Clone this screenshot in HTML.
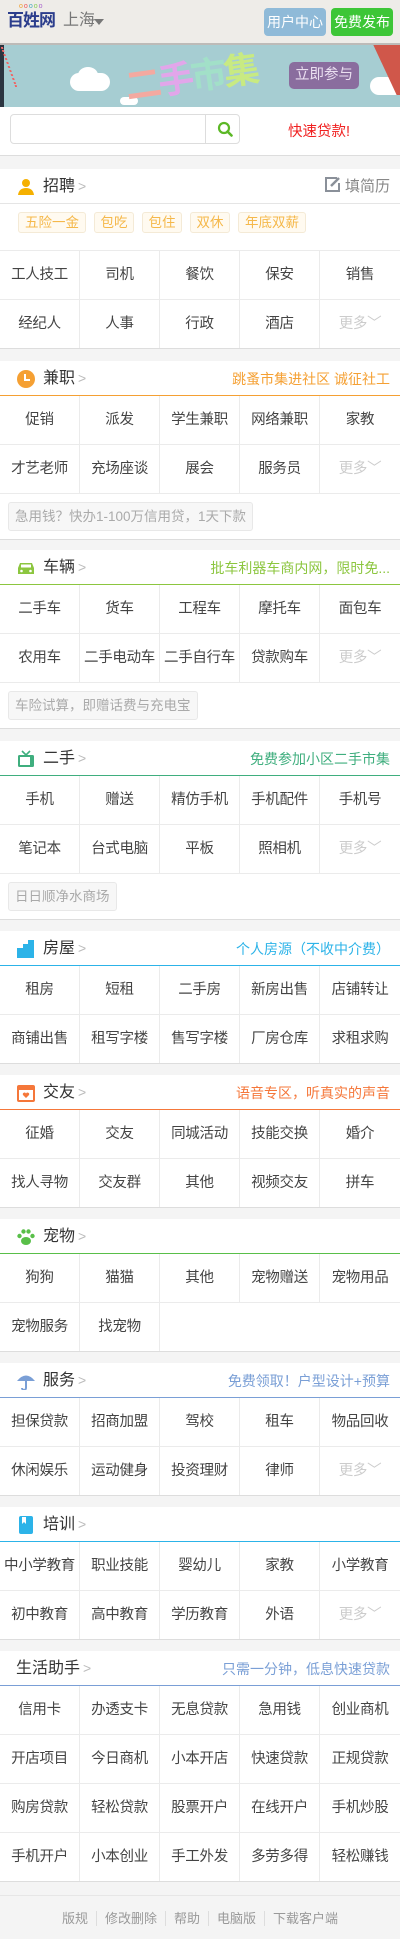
<!DOCTYPE html>
<html><head><meta charset="utf-8">
<style>
*{margin:0;padding:0;box-sizing:border-box}
body{width:400px;height:1939px;background:#f4f4f4;font-family:"Liberation Sans","Noto Sans CJK SC",sans-serif;color:#444;overflow:hidden;position:relative}
.hd{position:absolute;top:0;left:0;width:400px;height:45px;background:#eeece8;border-bottom:2px solid #bdbbb8}
.logo{position:absolute;left:7px;top:11px;font-size:17px;font-weight:bold;color:#2b3d8c;letter-spacing:-1px;line-height:20px}
.dots{position:absolute;left:19px;top:3px;font-size:7px;letter-spacing:1px;line-height:8px}
.city{position:absolute;left:63px;top:11px;font-size:16px;color:#777;line-height:20px}
.tri{position:absolute;left:94px;top:19px;width:0;height:0;border-left:5px solid transparent;border-right:5px solid transparent;border-top:6px solid #777}
.btn{position:absolute;top:8px;height:28px;width:62px;border-radius:4px;color:#fff;font-size:14px;text-align:center;line-height:28px}
.banner{position:absolute;top:45px;left:0;width:400px;height:62px;background:#a6cdd2;overflow:hidden}
.search{position:absolute;top:107px;left:0;width:400px;height:49px;background:#fff;border-bottom:1px solid #ddd}
.inp{position:absolute;left:10px;top:7px;width:230px;height:30px;border:1px solid #ddd;border-radius:4px}
.inp i{position:absolute;left:194px;top:0;width:1px;height:28px;background:#ddd}
.sec{position:absolute;left:0;width:400px;background:#fff;border-bottom:1px solid #ddd;overflow:hidden}
.sh{height:35px;border-bottom:1px solid #e5e5e5;position:relative}
.sh .ic{position:absolute;left:17px;top:9px;width:18px;height:18px}
.sh .t{position:absolute;left:43px;top:6px;font-size:16px;color:#333;line-height:22px}
.sh .t b{font-weight:normal;color:#bbb;font-size:14px;margin-left:3px}
.sh .r{position:absolute;right:10px;top:8px;font-size:14px;white-space:nowrap;line-height:20px}
.row{display:flex;height:49px;border-bottom:1px solid #ebebeb;overflow:hidden}
.row.l{border-bottom:none;height:48px}
.row span{width:80px;height:48px;border-right:1px solid #ebebeb;text-align:center;line-height:48px;font-size:14.5px;color:#444;white-space:nowrap;overflow:hidden;letter-spacing:-0.3px}
.row span:last-child{border-right:none}
.row span.m{color:#ccc}
.tags{height:47px;border-bottom:1px solid #ebebeb;position:relative}
.tag{position:absolute;top:8px;height:21px;border:1px solid #f4ead6;background:#fffaf0;color:#f5b84a;font-size:13.5px;line-height:19px;text-align:center;border-radius:3px}
.ad{height:45px;position:relative}
.ad div{position:absolute;left:8px;top:8px;height:29px;border:1px solid #e8e8e8;background:#f7f7f7;border-radius:3px;color:#aaa;font-size:13.5px;line-height:27px;padding:0 6px;white-space:nowrap}
.ft{position:absolute;top:1895px;left:0;width:400px;height:44px;border-top:1px solid #e6e6e6;background:#f4f4f4;text-align:center;font-size:13px;color:#999;padding-top:12px}
.ft span{padding:0 8px;border-left:1px solid #ddd}
.ft span:first-child{border-left:none}
</style></head><body>
<div class="hd">
  <div class="dots"><span style="color:#f0a030">o</span><span style="color:#e55">o</span><span style="color:#4ab">o</span><span style="color:#8c5">o</span><span style="color:#a6c">o</span></div>
  <div class="logo">百姓网</div>
  <div class="city">上海</div><div class="tri"></div>
  <div class="btn" style="left:264px;background:#8fbad8">用户中心</div>
  <div class="btn" style="left:331px;background:#3dc637">免费发布</div>
</div>
<div class="banner">
  <div style="position:absolute;left:0;top:0;width:4px;height:62px;background:#2b3540"></div>
  <div style="position:absolute;left:8px;top:2px;width:32px;height:40px;border-left:2px dotted #e66;transform:skewX(20deg)"></div>
  <div style="position:absolute;left:70px;top:28px;width:40px;height:18px;background:#fff;border-radius:10px"></div>
  <div style="position:absolute;left:78px;top:22px;width:20px;height:16px;background:#fff;border-radius:50%"></div>
  <div style="position:absolute;left:120px;top:52px;width:18px;height:8px;background:#fff;border-radius:5px"></div>
  <div style="position:absolute;left:125px;top:8px;font-size:36px;font-weight:bold;letter-spacing:-3px;line-height:50px;transform:rotate(-8deg)"><span style="color:#f4a9a0">二</span><span style="color:#e2a6ea">手</span><span style="color:#a2e0c8">市</span><span style="color:#c8ea82">集</span></div>
  <div style="position:absolute;left:289px;top:17px;width:70px;height:27px;background:#8a6d9e;border-radius:5px;color:#eadff0;font-size:14.5px;text-align:center;line-height:27px">立即参与</div>
  <div style="position:absolute;left:370px;top:32px;width:34px;height:18px;background:#fff;border-radius:10px"></div>
  <div style="position:absolute;left:385px;top:0;width:30px;height:50px;background:#d0574a;transform:skewX(25deg)"></div>
</div>
<div class="search">
  <div class="inp"><i></i>
    <svg style="position:absolute;left:206px;top:6px" width="16" height="16" viewBox="0 0 16 16"><circle cx="7" cy="7" r="5" fill="none" stroke="#5cb826" stroke-width="2.2"/><path d="M10.5 10.5L14.5 14.5" stroke="#5cb826" stroke-width="2.6" stroke-linecap="round"/></svg>
  </div>
  <div style="position:absolute;left:288px;top:13px;font-size:14.5px;color:#f02020">快速贷款!</div>
</div>

<div class="sec" style="top:169px">
  <div class="sh"><svg class="ic" viewBox="0 0 18 18"><circle cx="9" cy="5" r="4" fill="#f5b000"/><path d="M1 17 Q2 10 9 10 Q16 10 17 17Z" fill="#f5b000"/></svg><div class="t">招聘<b>&gt;</b></div>
  <div class="r" style="color:#888;font-size:15px;top:7px"><svg width="17" height="17" viewBox="0 0 17 17" style="vertical-align:-2px;margin-right:4px"><path d="M13 2H2v13h13V7" fill="none" stroke="#8a9099" stroke-width="2"/><path d="M7 10l8-8" stroke="#8a9099" stroke-width="2.5"/></svg>填简历</div></div>
  <div class="tags">
    <div class="tag" style="left:18px;width:68px">五险一金</div>
    <div class="tag" style="left:94px;width:40px">包吃</div>
    <div class="tag" style="left:142px;width:40px">包住</div>
    <div class="tag" style="left:190px;width:40px">双休</div>
    <div class="tag" style="left:238px;width:68px">年底双薪</div>
  </div>
  <div class="row"><span>工人技工</span><span>司机</span><span>餐饮</span><span>保安</span><span>销售</span></div>
  <div class="row l"><span>经纪人</span><span>人事</span><span>行政</span><span>酒店</span><span class="m">更多﹀</span></div>
</div>

<div class="sec" style="top:361px">
  <div class="sh" style="border-color:#f5a033"><svg class="ic" viewBox="0 0 18 18"><circle cx="9" cy="9" r="9" fill="#f5a033"/><path d="M8 4v6h5" fill="none" stroke="#fff" stroke-width="2"/></svg><div class="t">兼职<b>&gt;</b></div><div class="r" style="color:#f5a033">跳蚤市集进社区 诚征社工</div></div>
  <div class="row"><span>促销</span><span>派发</span><span>学生兼职</span><span>网络兼职</span><span>家教</span></div>
  <div class="row"><span>才艺老师</span><span>充场座谈</span><span>展会</span><span>服务员</span><span class="m">更多﹀</span></div>
  <div class="ad"><div>急用钱？快办1-100万信用贷，1天下款</div></div>
</div>

<div class="sec" style="top:550px">
  <div class="sh" style="border-color:#8cc63f"><svg class="ic" viewBox="0 0 18 18"><path d="M1 9l2-5h12l2 5v6H1z" fill="#8cc63f"/><rect x="4" y="5.5" width="10" height="3" fill="#fff"/><circle cx="4.5" cy="12" r="1.3" fill="#fff"/><circle cx="13.5" cy="12" r="1.3" fill="#fff"/></svg><div class="t">车辆<b>&gt;</b></div><div class="r" style="color:#8cc63f">批车利器车商内网，限时免...</div></div>
  <div class="row"><span>二手车</span><span>货车</span><span>工程车</span><span>摩托车</span><span>面包车</span></div>
  <div class="row"><span>农用车</span><span>二手电动车</span><span>二手自行车</span><span>贷款购车</span><span class="m">更多﹀</span></div>
  <div class="ad"><div>车险试算，即赠话费与充电宝</div></div>
</div>

<div class="sec" style="top:741px">
  <div class="sh" style="border-color:#3fae7e"><svg class="ic" viewBox="0 0 18 18"><path d="M5 1l4 4 4-4" fill="none" stroke="#3fae7e" stroke-width="1.6"/><rect x="1" y="5" width="16" height="12" rx="1.5" fill="#3fae7e"/><rect x="3" y="7" width="10" height="8" fill="#fff"/></svg><div class="t">二手<b>&gt;</b></div><div class="r" style="color:#3fae7e">免费参加小区二手市集</div></div>
  <div class="row"><span>手机</span><span>赠送</span><span>精仿手机</span><span>手机配件</span><span>手机号</span></div>
  <div class="row"><span>笔记本</span><span>台式电脑</span><span>平板</span><span>照相机</span><span class="m">更多﹀</span></div>
  <div class="ad"><div>日日顺净水商场</div></div>
</div>

<div class="sec" style="top:931px">
  <div class="sh" style="border-color:#2cb3e8"><svg class="ic" viewBox="0 0 18 18"><rect x="0" y="8" width="6" height="10" fill="#2cb3e8"/><rect x="6" y="4" width="5" height="14" fill="#2cb3e8"/><rect x="11" y="0" width="6" height="18" fill="#2cb3e8"/></svg><div class="t">房屋<b>&gt;</b></div><div class="r" style="color:#2cb3e8">个人房源（不收中介费）</div></div>
  <div class="row"><span>租房</span><span>短租</span><span>二手房</span><span>新房出售</span><span>店铺转让</span></div>
  <div class="row l"><span>商铺出售</span><span>租写字楼</span><span>售写字楼</span><span>厂房仓库</span><span>求租求购</span></div>
</div>

<div class="sec" style="top:1075px">
  <div class="sh" style="border-color:#f5773a"><svg class="ic" viewBox="0 0 18 18"><rect x="1" y="2" width="16" height="15" rx="1" fill="none" stroke="#f5773a" stroke-width="2"/><rect x="1" y="2" width="16" height="4" fill="#f5773a"/><path d="M9 14l-3-3a1.5 1.5 0 0 1 3-1.5a1.5 1.5 0 0 1 3 1.5z" fill="#f5773a"/></svg><div class="t">交友<b>&gt;</b></div><div class="r" style="color:#f5773a">语音专区，听真实的声音</div></div>
  <div class="row"><span>征婚</span><span>交友</span><span>同城活动</span><span>技能交换</span><span>婚介</span></div>
  <div class="row l"><span>找人寻物</span><span>交友群</span><span>其他</span><span>视频交友</span><span>拼车</span></div>
</div>

<div class="sec" style="top:1219px">
  <div class="sh" style="border-color:#59bf49"><svg class="ic" viewBox="0 0 18 18"><ellipse cx="9" cy="13" rx="5" ry="4" fill="#59bf49"/><circle cx="2.5" cy="8" r="2.2" fill="#59bf49"/><circle cx="6.5" cy="3.5" r="2.2" fill="#59bf49"/><circle cx="11.5" cy="3.5" r="2.2" fill="#59bf49"/><circle cx="15.5" cy="8" r="2.2" fill="#59bf49"/></svg><div class="t">宠物<b>&gt;</b></div></div>
  <div class="row"><span>狗狗</span><span>猫猫</span><span>其他</span><span>宠物赠送</span><span>宠物用品</span></div>
  <div class="row l"><span>宠物服务</span><span>找宠物</span><span style="border-right:none"></span><span style="border-right:none"></span><span></span></div>
</div>

<div class="sec" style="top:1363px">
  <div class="sh" style="border-color:#7a9fd6"><svg class="ic" viewBox="0 0 18 18"><path d="M0 9Q9 -2 18 9z" fill="#7a9fd6"/><path d="M9 8v8a2 2 0 0 1-4 0" fill="none" stroke="#7a9fd6" stroke-width="2"/></svg><div class="t">服务<b>&gt;</b></div><div class="r" style="color:#7a9fd6">免费领取！户型设计+预算</div></div>
  <div class="row"><span>担保贷款</span><span>招商加盟</span><span>驾校</span><span>租车</span><span>物品回收</span></div>
  <div class="row l"><span>休闲娱乐</span><span>运动健身</span><span>投资理财</span><span>律师</span><span class="m">更多﹀</span></div>
</div>

<div class="sec" style="top:1507px">
  <div class="sh" style="border-color:#2cb3e8"><svg class="ic" viewBox="0 0 18 18"><rect x="2" y="0" width="14" height="18" rx="2" fill="#2cb3e8"/><path d="M5 1v7l2-2 2 2V1" fill="#fff"/></svg><div class="t">培训<b>&gt;</b></div></div>
  <div class="row"><span>中小学教育</span><span>职业技能</span><span>婴幼儿</span><span>家教</span><span>小学教育</span></div>
  <div class="row l"><span>初中教育</span><span>高中教育</span><span>学历教育</span><span>外语</span><span class="m">更多﹀</span></div>
</div>

<div class="sec" style="top:1651px">
  <div class="sh" style="border-color:#7a9fd6"><div class="t" style="left:16px">生活助手<b>&gt;</b></div><div class="r" style="color:#7a9fd6">只需一分钟，低息快速贷款</div></div>
  <div class="row"><span>信用卡</span><span>办透支卡</span><span>无息贷款</span><span>急用钱</span><span>创业商机</span></div>
  <div class="row"><span>开店项目</span><span>今日商机</span><span>小本开店</span><span>快速贷款</span><span>正规贷款</span></div>
  <div class="row"><span>购房贷款</span><span>轻松贷款</span><span>股票开户</span><span>在线开户</span><span>手机炒股</span></div>
  <div class="row l"><span>手机开户</span><span>小本创业</span><span>手工外发</span><span>多劳多得</span><span>轻松赚钱</span></div>
</div>

<div class="ft"><span>版规</span><span>修改删除</span><span>帮助</span><span>电脑版</span><span>下载客户端</span></div>
</body></html>
